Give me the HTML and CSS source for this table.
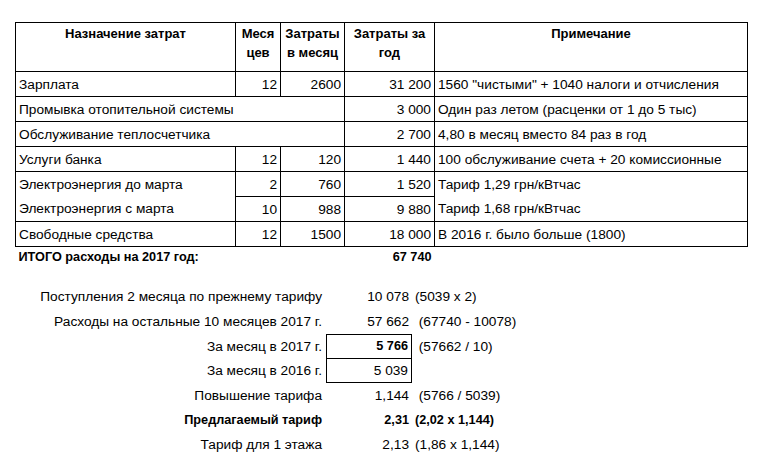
FILE: index.html
```html
<!DOCTYPE html>
<html lang="ru">
<head>
<meta charset="utf-8">
<link rel="stylesheet" href="styles.css">
</head>
<body>
<table class="costs">
  <colgroup>
    <col class="c1"><col class="c2"><col class="c3"><col class="c4"><col class="c5">
  </colgroup>
  <tr class="head">
    <th>Назначение затрат</th>
    <th>Меся<br>цев</th>
    <th>Затраты<br>в месяц</th>
    <th>Затраты за<br>год</th>
    <th>Примечание</th>
  </tr>
  <tr>
    <td>Зарплата</td><td class="num">12</td><td class="num">2600</td><td class="num">31&nbsp;200</td>
    <td>1560 "чистыми" + 1040 налоги и отчисления</td>
  </tr>
  <tr>
    <td colspan="3">Промывка отопительной системы</td><td class="num">3&nbsp;000</td>
    <td>Один раз летом (расценки от 1 до 5 тыс)</td>
  </tr>
  <tr>
    <td colspan="3">Обслуживание теплосчетчика</td><td class="num">2&nbsp;700</td>
    <td>4,80 в месяц вместо 84 раз в год</td>
  </tr>
  <tr>
    <td>Услуги банка</td><td class="num">12</td><td class="num">120</td><td class="num">1&nbsp;440</td>
    <td>100 обслуживание счета + 20 комиссионные</td>
  </tr>
  <tr>
    <td class="open">Электроэнергия до марта</td><td class="num">2</td><td class="num">760</td><td class="num">1&nbsp;520</td>
    <td class="open">Тариф 1,29 грн/кВтчас</td>
  </tr>
  <tr>
    <td>Электроэнергия с марта</td><td class="num">10</td><td class="num">988</td><td class="num">9&nbsp;880</td>
    <td>Тариф 1,68 грн/кВтчас</td>
  </tr>
  <tr>
    <td>Свободные средства</td><td class="num">12</td><td class="num">1500</td><td class="num">18&nbsp;000</td>
    <td>В 2016 г. было больше (1800)</td>
  </tr>
  <tr class="total">
    <td colspan="3" class="b">ИТОГО расходы на 2017 год:</td><td class="num b">67&nbsp;740</td><td></td>
  </tr>
</table>

<div class="calc">
  <div class="lbl">Поступления 2 месяца по прежнему тарифу</div>
  <div class="val">10&nbsp;078</div>
  <div class="note">(5039 x 2)</div>

  <div class="lbl">Расходы на остальные 10 месяцев 2017 г.</div>
  <div class="val">57&nbsp;662</div>
  <div class="note"> (67740 - 10078)</div>

  <div class="lbl">За месяц в 2017 г.</div>
  <div class="val box box-top b">5&nbsp;766</div>
  <div class="note"> (57662 / 10)</div>

  <div class="lbl">За месяц в 2016 г.</div>
  <div class="val box box-bottom">5&nbsp;039</div>
  <div class="note"></div>

  <div class="lbl">Повышение тарифа</div>
  <div class="val">1,144</div>
  <div class="note"> (5766 / 5039)</div>

  <div class="lbl b">Предлагаемый тариф</div>
  <div class="val b">2,31</div>
  <div class="note b">(2,02 x 1,144)</div>

  <div class="lbl">Тариф для 1 этажа</div>
  <div class="val">2,13</div>
  <div class="note">(1,86 x 1,144)</div>
</div>
</body>
</html>
```

FILE: styles.css
```css
html, body {
  margin: 0;
  background: #fff;
}

body {
  padding: 22px 0 0 15px;
  font-family: "Liberation Sans", Arial, sans-serif;
  font-size: 13.7px;
  color: #000;
}

.costs {
  border-collapse: collapse;
  table-layout: fixed;
  width: 732px;
}

.c1 { width: 220px; }
.c2 { width: 45px; }
.c3 { width: 64px; }
.c4 { width: 90px; }
.c5 { width: 313px; }

.costs th,
.costs td {
  border: 1px solid #000;
  padding: 0 3px;
  white-space: nowrap;
  overflow: visible;
}

.costs th {
  font-size: 13px;
  font-weight: bold;
  line-height: 19px;
  vertical-align: top;
  text-align: center;
  padding-top: 1px;
}

.costs tr.head { height: 49px; }
.costs tr { height: 25px; }

.costs td {
  vertical-align: middle;
  text-align: left;
}

.costs td.num { text-align: right; }

.costs td.open { border-bottom-style: hidden; }

.costs tr.total { height: 20px; }
.costs tr.total td { border: none; }

.b {
  font-weight: bold;
  font-size: 12.7px;
}

.calc {
  display: grid;
  grid-template-columns: 311px 86px auto;
  grid-auto-rows: 24.7px;
  margin-top: 18px;
  align-items: center;
}

.calc > div {
  white-space: pre;
  height: 100%;
  display: flex;
  align-items: center;
  box-sizing: border-box;
}

.lbl {
  justify-content: flex-end;
  padding-right: 4px;
}

.val {
  justify-content: flex-end;
  padding-right: 3px;
}

.note {
  padding-left: 3px;
}

.box {
  border: 1px solid #000;
}

.box-bottom {
  border-top: none;
}
```
